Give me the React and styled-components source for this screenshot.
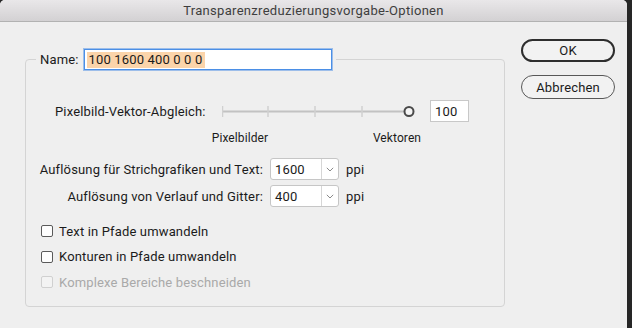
import React from "react";
import styled, { createGlobalStyle } from "styled-components";

const Global = createGlobalStyle`
  html, body { margin: 0; padding: 0; }
  body {
    background: #262626;
    font-family: Roboto, "Noto Sans", "Liberation Sans", sans-serif;
    font-size: 13px;
    letter-spacing: 0.15px;
    color: #1b1b1b;
  }
`;

const Window = styled.div`
  width: 627px;
  height: 328px;
  background: #efefef;
  border-radius: 5px 5px 0 0;
  overflow: hidden;
  display: flex;
  flex-direction: column;
`;

const TitleBar = styled.div`
  height: 21px;
  flex: none;
  border-bottom: 1px solid #b2b2b2;
  background: linear-gradient(#e9e7e9, #d3d1d3);
  display: flex;
  align-items: center;
  justify-content: center;
  font-size: 13px;
  letter-spacing: 0.3px;
  color: #3e3e3e;
`;

const Body = styled.div`
  display: flex;
  align-items: flex-start;
  padding: 17px 12px 0 25px;
`;

const Group = styled.fieldset`
  box-sizing: border-box;
  width: 480px;
  min-width: 0;
  margin: 10px 0 0 0;
  padding: 30px 10px 15px 10px;
  border: 1px solid #d4d4d4;
  border-radius: 4px;
`;

const Legend = styled.legend`
  padding: 0 4px;
  display: flex;
  align-items: center;
  gap: 5px;
`;

const Label = styled.span`
  white-space: nowrap;
  color: ${(p) => (p.$disabled ? "#a9a9a9" : "#1b1b1b")};
`;

const TextField = styled.div`
  box-sizing: border-box;
  width: ${(p) => p.$width}px;
  height: ${(p) => p.$height}px;
  background: #fff;
  border: 1px solid ${(p) => (p.$focused ? "#4b8fe6" : "#c8c8c8")};
  box-shadow: ${(p) => (p.$focused ? "0 0 0 1px rgba(90,150,230,0.55)" : "none")};
  display: flex;
  align-items: center;
  padding-left: ${(p) => (p.$focused ? 2 : 4)}px;
  font-size: 13px;
  white-space: nowrap;
`;

const Selection = styled.span`
  background: #fbd4aa;
  padding: 1px 3px 1px 2px;
  line-height: 14px;
`;

const SliderRow = styled.div`
  display: flex;
  align-items: center;
  height: 22px;
  padding-left: 19px;
`;

const SliderLabel = styled.span`
  width: 167px;
  flex: none;
  white-space: nowrap;
`;

const ValueField = styled(TextField)`
  margin-left: 8px;
`;

const ScaleRow = styled.div`
  display: flex;
  gap: 97px;
  margin-top: 9px;
  padding-left: 174px;
  height: 14px;
`;

const ScaleLabel = styled.span`
  width: 60px;
  text-align: center;
  font-size: 12px;
  letter-spacing: 0.1px;
  line-height: 14px;
`;

const ResGrid = styled.div`
  display: grid;
  grid-template-columns: 227px 69px auto;
  column-gap: 7px;
  row-gap: 5px;
  align-items: center;
  margin-top: 13px;
`;

const ResLabel = styled.span`
  justify-self: end;
  white-space: nowrap;
`;

const Select = styled.div`
  box-sizing: border-box;
  height: 22px;
  background: #fff;
  border: 1px solid #c6c6c6;
  border-radius: 3px;
  display: grid;
  grid-template-columns: 1fr 17px;
  font-size: 13px;
`;

const SelectValue = styled.span`
  display: flex;
  align-items: center;
  padding-left: 4px;
`;

const SelectArrow = styled.span`
  border-left: 1px solid #d6d6d6;
  display: flex;
  align-items: center;
  justify-content: center;
`;

const Checks = styled.div`
  display: flex;
  flex-direction: column;
  gap: 7.5px;
  margin-top: 15px;
  padding-left: 5px;
`;

const CheckRow = styled.label`
  display: flex;
  align-items: center;
  gap: 6px;
  height: 18px;
`;

const Box = styled.span`
  box-sizing: border-box;
  flex: none;
  width: 12px;
  height: 12px;
  border: 1px solid ${(p) => (p.$disabled ? "#d0d0d0" : "#5a5a5a")};
  border-radius: 2px;
  background: ${(p) => (p.$disabled ? "#f3f3f3" : "#fdfdfd")};
`;

const Buttons = styled.div`
  display: flex;
  flex-direction: column;
  gap: 13px;
  width: 94px;
  margin-left: 16px;
`;

const Button = styled.div`
  box-sizing: border-box;
  height: ${(p) => (p.$primary ? 23 : 24)}px;
  border: ${(p) => (p.$primary ? "2px solid #2e2e2e" : "1px solid #585858")};
  border-radius: 12px;
  background: #f2f2f2;
  display: flex;
  align-items: center;
  justify-content: center;
  font-size: 13px;
  color: #1b1b1b;
`;

function Chevron() {
  return (
    <svg width="8" height="5" viewBox="0 0 8 5">
      <path d="M0.8 0.8 L4 4 L7.2 0.8" fill="none" stroke="#8a8a8a" strokeWidth="1" />
    </svg>
  );
}

function Slider() {
  const ticks = [0.5, 46, 93, 140];
  return (
    <svg width="200" height="22" viewBox="0 0 200 22">
      <line x1="0" y1="11.5" x2="187" y2="11.5" stroke="#c2c2c2" strokeWidth="2" />
      {ticks.map((x) => (
        <line key={x} x1={x} y1="6" x2={x} y2="17" stroke="#d0d0d0" strokeWidth="1.5" />
      ))}
      <circle cx="187" cy="11.5" r="4.5" fill="#f5f5f5" stroke="#4a4a4a" strokeWidth="2" />
    </svg>
  );
}

function Check({ children, disabled }) {
  return (
    <CheckRow>
      <Box $disabled={disabled} />
      <Label $disabled={disabled}>{children}</Label>
    </CheckRow>
  );
}

export default function App() {
  return (
    <>
      <Global />
      <Window>
        <TitleBar>Transparenzreduzierungsvorgabe-Optionen</TitleBar>
        <Body>
          <Group>
            <Legend>
              <Label>Name:</Label>
              <TextField $width={248} $height={21} $focused>
                <Selection>100 1600 400 0 0 0</Selection>
              </TextField>
            </Legend>
            <SliderRow>
              <SliderLabel>Pixelbild-Vektor-Abgleich:</SliderLabel>
              <Slider />
              <ValueField $width={39} $height={22}>100</ValueField>
            </SliderRow>
            <ScaleRow>
              <ScaleLabel>Pixelbilder</ScaleLabel>
              <ScaleLabel>Vektoren</ScaleLabel>
            </ScaleRow>
            <ResGrid>
              <ResLabel>Auflösung für Strichgrafiken und Text:</ResLabel>
              <Select>
                <SelectValue>1600</SelectValue>
                <SelectArrow><Chevron /></SelectArrow>
              </Select>
              <Label>ppi</Label>
              <ResLabel>Auflösung von Verlauf und Gitter:</ResLabel>
              <Select>
                <SelectValue>400</SelectValue>
                <SelectArrow><Chevron /></SelectArrow>
              </Select>
              <Label>ppi</Label>
            </ResGrid>
            <Checks>
              <Check>Text in Pfade umwandeln</Check>
              <Check>Konturen in Pfade umwandeln</Check>
              <Check disabled>Komplexe Bereiche beschneiden</Check>
            </Checks>
          </Group>
          <Buttons>
            <Button $primary>OK</Button>
            <Button>Abbrechen</Button>
          </Buttons>
        </Body>
      </Window>
    </>
  );
}
